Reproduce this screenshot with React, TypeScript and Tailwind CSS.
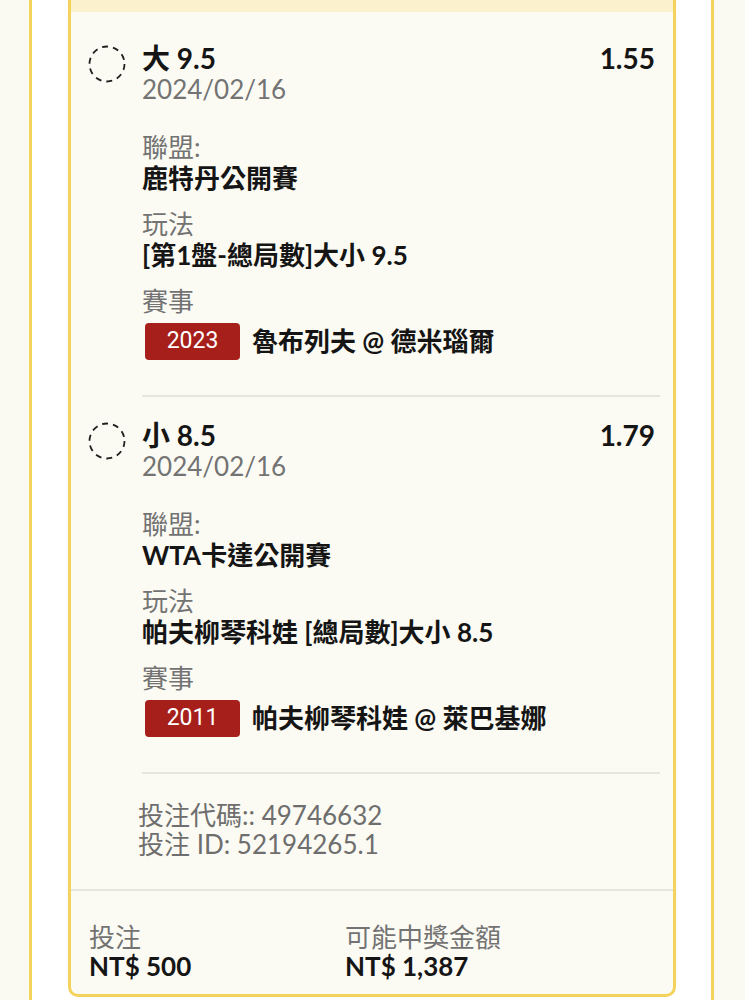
import React from "react";

interface Bet {
  pick: string;
  odds: string;
  date: string;
  league: string;
  market: string;
  code: string;
  match: string;
}

const bets: Bet[] = [
  {
    pick: "大 9.5",
    odds: "1.55",
    date: "2024/02/16",
    league: "鹿特丹公開賽",
    market: "[第1盤-總局數]大小 9.5",
    code: "2023",
    match: "魯布列夫 @ 德米瑙爾",
  },
  {
    pick: "小 8.5",
    odds: "1.79",
    date: "2024/02/16",
    league: "WTA卡達公開賽",
    market: "帕夫柳琴科娃 [總局數]大小 8.5",
    code: "2011",
    match: "帕夫柳琴科娃 @ 萊巴基娜",
  },
];

const DashedCircle = () => (
  <svg width="38" height="38" viewBox="0 0 38 38" className="shrink-0 mt-[2px]">
    <circle cx="19" cy="19" r="17.5" fill="none" stroke="#1f1f1f" strokeWidth="1.8" strokeDasharray="6 5" />
  </svg>
);

const BetItem = ({ bet }: { bet: Bet }) => (
  <div className="flex gap-[16px] pl-[17px] pr-[13px]">
    <DashedCircle />
    <div className="flex-1">
      <div className="flex justify-between items-center h-[31px]">
        <span className="text-[28px] leading-[31px] font-bold text-[#151515]">{bet.pick}</span>
        <span className="text-[28px] leading-[31px] font-bold text-[#151515] pr-[5px]">{bet.odds}</span>
      </div>
      <div className="text-[26px] leading-[31px] text-[#737373]">{bet.date}</div>

      <div className="mt-[27px] text-[26px] leading-[31px] text-[#737373]">聯盟:</div>
      <div className="text-[26px] leading-[31px] font-bold text-[#151515]">{bet.league}</div>

      <div className="mt-[15px] text-[26px] leading-[31px] text-[#737373]">玩法</div>
      <div className="text-[26px] leading-[31px] font-bold text-[#151515]">{bet.market}</div>

      <div className="mt-[15px] text-[26px] leading-[31px] text-[#737373]">賽事</div>
      <div className="mt-[6px] flex items-center gap-[12px]">
        <span className="ml-[3px] w-[95px] h-[37px] rounded-[4px] bg-[#a61f1b] text-white text-[23px] font-['Roboto',sans-serif] flex items-center justify-center">
          {bet.code}
        </span>
        <span className="text-[26px] leading-[31px] font-bold text-[#151515]">{bet.match}</span>
      </div>

      <div className="mt-[35px] border-t-2 border-[#e6e5de]" />
    </div>
  </div>
);

export default function App() {
  return (
    <div className="h-[1000px] overflow-hidden bg-[#fbfaf2] font-['Lato','Noto_Sans_CJK_TC',sans-serif]">
      <div className="ml-[29px] w-[685px] h-full border-x-[3px] border-[#f4d35c] bg-white pl-[36px] pr-[35px]">
        <div className="h-[997px] border-x-[3px] border-b-[3px] border-[#f4d35c] rounded-b-[10px] bg-[#fcfbf3] overflow-hidden flex flex-col">
          <div className="h-[12px] bg-[#fcf1cd]" />

          <div className="pt-[31px] flex flex-col gap-[23px]">
            {bets.map((b) => (
              <BetItem key={b.code} bet={b} />
            ))}
          </div>

          <div className="pl-[67px] pt-[27px] text-[26px] leading-[29px] text-[#6e6e6e]">
            <div>投注代碼:: 49746632</div>
            <div>投注 ID: 52194265.1</div>
          </div>

          <div className="mt-[30px] border-t-2 border-[#e6e5de]" />

          <div className="flex pl-[18px] pt-[32px]">
            <div className="w-[256px]">
              <div className="text-[26px] leading-[29px] text-[#737373]">投注</div>
              <div className="text-[26px] leading-[29px] font-bold text-[#151515]">NT$ 500</div>
            </div>
            <div>
              <div className="text-[26px] leading-[29px] text-[#737373]">可能中獎金額</div>
              <div className="text-[26px] leading-[29px] font-bold text-[#151515]">NT$ 1,387</div>
            </div>
          </div>
        </div>
      </div>
    </div>
  );
}
